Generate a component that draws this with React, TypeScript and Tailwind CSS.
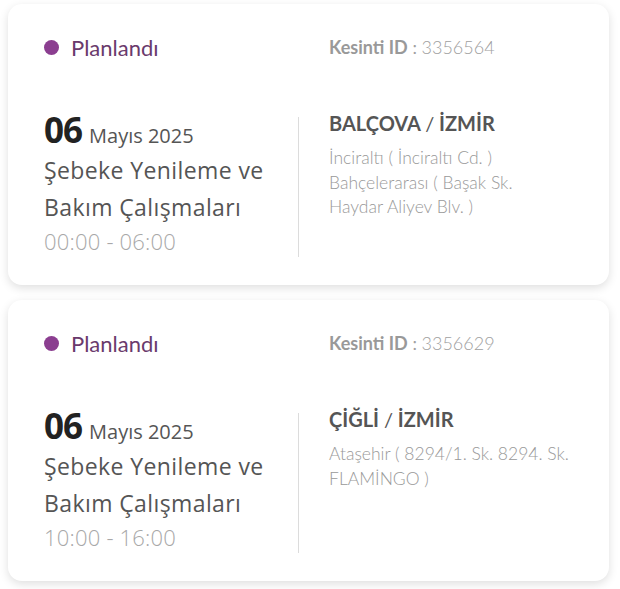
import React from "react";

type Outage = {
  id: string;
  start: string;
  end: string;
  district: string;
  lines: string[];
};

const data: Outage[] = [
  {
    id: "3356564",
    start: "00:00",
    end: "06:00",
    district: "BALÇOVA",
    lines: ["İnciraltı ( İnciraltı Cd. )", "Bahçelerarası ( Başak Sk.", "Haydar Aliyev Blv. )"],
  },
  {
    id: "3356629",
    start: "10:00",
    end: "16:00",
    district: "ÇİĞLİ",
    lines: ["Ataşehir ( 8294/1. Sk. 8294. Sk.", "FLAMİNGO )"],
  },
];

function Card({ o }: { o: Outage }) {
  return (
    <div className="w-[601px] h-[281px] ml-[8px] bg-white rounded-[14px] shadow-[0_3px_10px_rgba(0,0,0,0.13)] pt-[31px] pl-[36px]">
      <div className="flex h-6 items-center">
        <div className="w-[285px] flex items-center gap-[12px] font-['Lato',sans-serif]">
          <span className="w-[15px] h-[15px] rounded-full bg-[#8b3e90]" />
          <span className="text-[22px] text-[#6a3a6c]">Planlandı</span>
        </div>
        <div className="font-['Lato',sans-serif] text-[18px] text-[#a0a0a0]">
          <span className="font-bold text-[#999]">Kesinti ID</span> : <span className="font-light">{o.id}</span>
        </div>
      </div>
      <div className="flex mt-[54px]">
        <div className="w-[254px] font-['Open_Sans',sans-serif]">
          <div className="h-[34px] leading-[34px] flex items-baseline">
            <span className="text-[35px] font-bold text-[#222] tracking-[-1px]">06</span>
            <span className="text-[20px] text-[#555] ml-[7px]">Mayıs 2025</span>
          </div>
          <div className="text-[23px] leading-[37px] text-[#555] mt-[5px] tracking-[0.4px]">
            Şebeke Yenileme ve
            <br />
            Bakım Çalışmaları
          </div>
          <div className="text-[22px] leading-[30px] font-light text-[#a8a8a8] tracking-[0.2px]">
            {o.start} - {o.end}
          </div>
        </div>
        <div className="w-px bg-[#dcdcdc] h-[140px] mt-[4px]" />
        <div className="pl-[30px] font-['Lato',sans-serif]">
          <div className="text-[20px] leading-[20px] font-bold text-[#555]">
            {o.district} <span className="font-normal">/</span> İZMİR
          </div>
          <div className="mt-[13px] text-[17.5px] leading-[24.5px] font-light text-[#999]">
            {o.lines.map((l) => (
              <div key={l}>{l}</div>
            ))}
          </div>
        </div>
      </div>
    </div>
  );
}

export default function App() {
  return (
    <div className="w-[620px] h-[589px] bg-white pt-[4px] flex flex-col gap-[15px]">
      {data.map((o) => (
        <Card key={o.id} o={o} />
      ))}
    </div>
  );
}
